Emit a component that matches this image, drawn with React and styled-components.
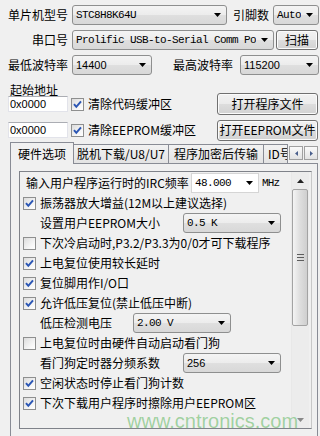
import React from 'react';
import styled, { createGlobalStyle } from 'styled-components';

const GlobalStyle = createGlobalStyle`
    html, body {
        margin: 0;
        padding: 0;
        background: #f0f0f0;
    }
    body {
        font-family: "Noto Sans CJK SC", "DejaVu Sans", sans-serif;
        font-size: 12px;
        color: #000;
    }
`;

const Window = styled.div`
    position: relative;
    width: 320px;
    height: 436px;
    overflow: hidden;
    background: #f0f0f0;
`;

const Row = styled.div`
    display: flex;
    align-items: center;
    height: 20px;
    margin-top: 5px;
    padding-left: 6px;
`;

const Label = styled.span`
    flex: none;
    width: ${props => props.$w}px;
    margin-left: ${props => props.$ml || 0}px;
    text-align: ${props => props.$align || 'left'};
    line-height: 14px;
    white-space: nowrap;
`;

const ComboBox = styled.div`
    flex: none;
    box-sizing: border-box;
    width: ${props => props.$w}px;
    height: 20px;
    margin-left: ${props => props.$ml || 0}px;
    display: flex;
    align-items: center;
    padding-left: 3px;
    border: 1px solid ${props => (props.$edit ? '#d5d5d5' : '#8e8f8f')};
    border-radius: ${props => (props.$edit ? '0' : '3px')};
    background: ${props =>
        props.$edit
            ? '#ffffff'
            : 'linear-gradient(#f4f4f4, #ececec 50%, #dfdfdf 51%, #d8d8d8)'};
    font-family: ${props =>
        props.$mono ? '"Liberation Mono", monospace' : '"Liberation Sans", sans-serif'};
    font-size: 11px;
    letter-spacing: ${props => (props.$mono ? '-0.6px' : '0')};
`;

const ComboText = styled.span`
    flex: 1;
    overflow: hidden;
    white-space: nowrap;
    line-height: 14px;
`;

const ArrowBox = styled.span`
    flex: none;
    width: 17px;
    display: flex;
    justify-content: center;
`;

const DropArrow = () => (
    <ArrowBox>
        <svg width="7" height="4" viewBox="0 0 7 4">
            <path d="M0 0 H7 L3.5 4 Z" fill="#000" />
        </svg>
    </ArrowBox>
);

const Combo = ({ children, ...rest }) => (
    <ComboBox {...rest}>
        <ComboText>{children}</ComboText>
        <DropArrow />
    </ComboBox>
);

const Button = styled.div`
    flex: none;
    box-sizing: border-box;
    width: ${props => props.$w}px;
    height: ${props => props.$h || 22}px;
    margin-left: ${props => (props.$auto ? 'auto' : `${props.$ml || 0}px`)};
    display: flex;
    align-items: center;
    justify-content: center;
    border: 1px solid #707070;
    border-radius: 3px;
    box-shadow: inset 0 0 0 1px #fbfbfb;
    background: linear-gradient(#f2f2f2, #ebebeb 50%, #dddddd 51%, #d2d2d2);
    line-height: 14px;
    white-space: nowrap;
`;

const Title = styled.div`
    height: 12px;
    margin: 9px 0 -3px 10px;
    line-height: 12px;
`;

const AddrRow = styled.div`
    display: flex;
    align-items: center;
    height: 22px;
    margin-top: ${props => props.$mt || 0}px;
    padding: 0 2px 0 8px;
`;

const AddrInput = styled.div`
    flex: none;
    box-sizing: border-box;
    width: 60px;
    height: 16px;
    padding-left: 1px;
    display: flex;
    align-items: center;
    background: #fff;
    border: 1px solid #e2e3ea;
    border-top-color: #abadb3;
    font-family: "Liberation Sans", sans-serif;
    font-size: 11px;
`;

const BoxMark = styled.span`
    flex: none;
    box-sizing: border-box;
    width: 13px;
    height: 13px;
    margin-left: ${props => props.$ml || 0}px;
    border: 1px solid #8e8f8f;
    background: linear-gradient(135deg, #dcdcdc, #f7f7f7 70%, #ffffff);
    display: flex;
    align-items: center;
    justify-content: center;
`;

const CheckBox = ({ checked, ml }) => (
    <BoxMark $ml={ml}>
        {checked && (
            <svg width="11" height="11" viewBox="0 0 11 11">
                <path
                    d="M2 5.2 L4.3 7.8 L9 2.4"
                    fill="none"
                    stroke="#2b56b4"
                    strokeWidth="2"
                />
            </svg>
        )}
    </BoxMark>
);

const CheckText = styled.span`
    margin-left: 4px;
    line-height: 14px;
    white-space: nowrap;
`;

const TabStrip = styled.div`
    position: relative;
    z-index: 1;
    display: flex;
    align-items: flex-end;
    height: 21px;
    margin-top: 1px;
    padding-left: 10px;
`;

const Tab = styled.div`
    flex: none;
    box-sizing: border-box;
    width: ${props => props.$w}px;
    height: ${props => (props.$active ? 22 : 19)}px;
    margin-left: ${props => (props.$first ? 0 : -1)}px;
    margin-bottom: ${props => (props.$active ? -1 : 0)}px;
    padding-left: ${props => props.$pl || 0}px;
    display: flex;
    align-items: center;
    justify-content: ${props => (props.$pl ? 'flex-start' : 'center')};
    border: 1px solid #898c95;
    border-bottom: none;
    background: ${props =>
        props.$active ? '#f0f0f0' : 'linear-gradient(#f2f2f2, #e3e3e3)'};
    overflow: hidden;
    white-space: nowrap;
    line-height: 14px;
`;

const Spin = styled.div`
    display: flex;
    gap: 1px;
    margin: 0 0 3px 1px;
`;

const SpinButton = styled.div`
    box-sizing: border-box;
    width: 14px;
    height: 14px;
    display: flex;
    align-items: center;
    justify-content: center;
    border: 1px solid #a0a0a0;
    background: linear-gradient(#fafafa, #e2e2e2);
`;

const Panel = styled.div`
    box-sizing: border-box;
    width: 308px;
    height: 290px;
    margin-left: 10px;
    padding: 7px 0 0 8px;
    border: 1px solid #898c95;
    background: #f0f0f0;
`;

const Group = styled.div`
    box-sizing: border-box;
    width: 293px;
    height: 258px;
    display: flex;
    border: 1px solid #7f8289;
    border-right-color: #c8c8c8;
`;

const Content = styled.div`
    width: 271px;
    padding-top: 1px;
`;

const Line = styled.div`
    display: flex;
    align-items: center;
    height: 20px;
    padding-left: ${props => props.$pl}px;
`;

const Unit = styled.span`
    margin-left: 3px;
    font-family: "Liberation Mono", monospace;
    font-size: 11px;
    letter-spacing: -0.8px;
`;

const Scrollbar = styled.div`
    box-sizing: border-box;
    width: 18px;
    display: flex;
    flex-direction: column;
    border-left: 1px solid #e8e8e8;
    background: #ececec;
`;

const ScrollArrow = styled.div`
    height: 17px;
    display: flex;
    align-items: center;
    justify-content: center;
    margin-top: ${props => (props.$bottom ? 'auto' : '0')};
`;

const Thumb = styled.div`
    box-sizing: border-box;
    height: 137px;
    margin: 0 1px 0 0;
    display: flex;
    align-items: center;
    justify-content: center;
    border: 1px solid #a3a3a3;
    border-radius: 2px;
    background: linear-gradient(90deg, #f4f4f4, #dedede 50%, #cfcfcf);
`;

const Grip = styled.div`
    width: 7px;
    height: 7px;
    background: repeating-linear-gradient(#5d5d5d 0 1px, transparent 1px 3px);
`;

const Watermark = styled.div`
    position: absolute;
    left: 127px;
    top: 409px;
    font-family: "Liberation Sans", sans-serif;
    font-size: 20px;
    line-height: 24px;
    color: rgba(60, 170, 60, 0.45);
    pointer-events: none;
`;

const options = [
    { type: 'text', pl: 6, label: '输入用户程序运行时的IRC频率', w: 165 },
    { type: 'check', checked: true, label: '振荡器放大增益(12M以上建议选择)' },
    { type: 'combo', label: '设置用户EEPROM大小', w: 143, value: '0.5 K', mono: true },
    { type: 'check', checked: false, label: '下次冷启动时,P3.2/P3.3为0/0才可下载程序' },
    { type: 'check', checked: true, label: '上电复位使用较长延时' },
    { type: 'check', checked: true, label: '复位脚用作I/O口' },
    { type: 'check', checked: true, label: '允许低压复位(禁止低压中断)' },
    { type: 'combo', label: '低压检测电压', w: 93, value: '2.00 V', mono: true },
    { type: 'check', checked: false, label: '上电复位时由硬件自动启动看门狗' },
    { type: 'combo', label: '看门狗定时器分频系数', w: 143, value: '256', mono: false },
    { type: 'check', checked: true, label: '空闲状态时停止看门狗计数' },
    { type: 'check', checked: true, label: '下次下载用户程序时擦除用户EEPROM区' },
];

const OptionLine = ({ item }) => {
    if (item.type === 'check') {
        return (
            <Line $pl={3}>
                <CheckBox checked={item.checked} />
                <CheckText>{item.label}</CheckText>
            </Line>
        );
    }
    if (item.type === 'combo') {
        return (
            <Line $pl={20}>
                <Label $w={item.w}>{item.label}</Label>
                <Combo $w={98} $mono={item.mono}>
                    {item.value}
                </Combo>
            </Line>
        );
    }
    return (
        <Line $pl={item.pl}>
            <Label $w={item.w}>{item.label}</Label>
            <Combo $edit $mono $w={68}>
                48.000
            </Combo>
            <Unit>MHz</Unit>
        </Line>
    );
};

const App = () => {
    return (
        <Window>
            <GlobalStyle />
            <Row>
                <Label $w={62} $align="right">单片机型号</Label>
                <Combo $w={155} $ml={4} $mono>STC8H8K64U</Combo>
                <Label $w={36} $ml={6}>引脚数</Label>
                <Combo $w={46} $ml={4} $mono>Auto</Combo>
            </Row>
            <Row>
                <Label $w={62} $align="right">串口号</Label>
                <Combo $w={202} $ml={4} $mono>Prolific USB-to-Serial Comm Port</Combo>
                <Button $w={42} $h={20} $ml={2}>扫描</Button>
            </Row>
            <Row>
                <Label $w={62} $align="right">最低波特率</Label>
                <Combo $w={80} $ml={4}>14400</Combo>
                <Label $w={62} $ml={19} $align="right">最高波特率</Label>
                <Combo $w={79} $ml={7}>115200</Combo>
            </Row>

            <Title>起始地址</Title>
            <AddrRow>
                <AddrInput>0x0000</AddrInput>
                <CheckBox checked ml={3} />
                <CheckText>清除代码缓冲区</CheckText>
                <Button $w={101} $auto>打开程序文件</Button>
            </AddrRow>
            <AddrRow $mt={4}>
                <AddrInput>0x0000</AddrInput>
                <CheckBox checked ml={3} />
                <CheckText>清除EEPROM缓冲区</CheckText>
                <Button $w={101} $h={21} $auto>打开EEPROM文件</Button>
            </AddrRow>

            <TabStrip>
                <Tab $w={64} $active $first>硬件选项</Tab>
                <Tab $w={96}>脱机下载/U8/U7</Tab>
                <Tab $w={96}>程序加密后传输</Tab>
                <Tab $w={25} $pl={4}>ID号</Tab>
                <Spin>
                    <SpinButton>
                        <svg width="3" height="5" viewBox="0 0 3 5">
                            <path d="M3 0 V5 L0 2.5 Z" fill="#4a5f8c" />
                        </svg>
                    </SpinButton>
                    <SpinButton>
                        <svg width="3" height="5" viewBox="0 0 3 5">
                            <path d="M0 0 V5 L3 2.5 Z" fill="#4a5f8c" />
                        </svg>
                    </SpinButton>
                </Spin>
            </TabStrip>
            <Panel>
                <Group>
                    <Content>
                        {options.map((item, index) => (
                            <OptionLine key={index} item={item} />
                        ))}
                    </Content>
                    <Scrollbar>
                        <ScrollArrow>
                            <svg width="7" height="4" viewBox="0 0 7 4">
                                <path d="M0 4 H7 L3.5 0 Z" fill="#222" />
                            </svg>
                        </ScrollArrow>
                        <Thumb>
                            <Grip />
                        </Thumb>
                        <ScrollArrow $bottom>
                            <svg width="7" height="4" viewBox="0 0 7 4">
                                <path d="M0 0 H7 L3.5 4 Z" fill="#888" />
                            </svg>
                        </ScrollArrow>
                    </Scrollbar>
                </Group>
            </Panel>
            <Watermark>www.cntronics.com</Watermark>
        </Window>
    );
};

export default App;
